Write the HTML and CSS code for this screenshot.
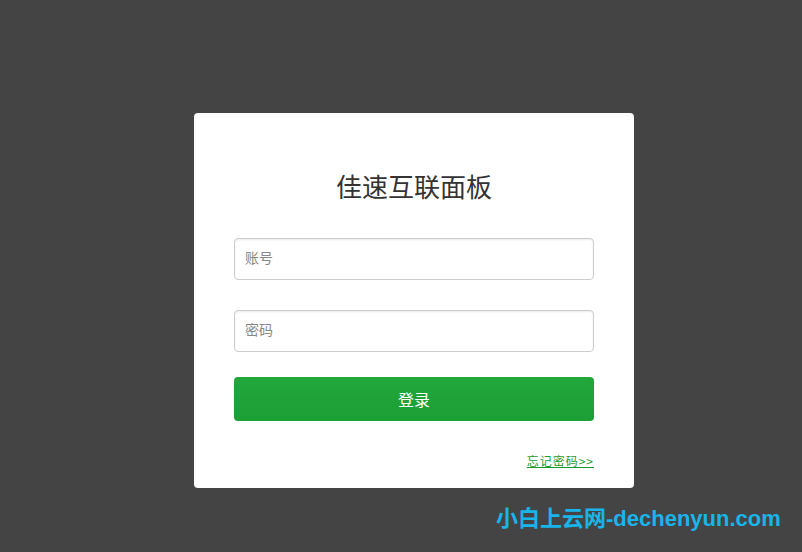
FILE: index.html
```html
<!DOCTYPE html>
<html lang="zh">
<head>
<meta charset="utf-8">
<title>佳速互联面板</title>
<link rel="stylesheet" href="styles.css">
</head>
<body>
<div class="page">
  <form class="card">
    <h1 class="title">佳速互联面板</h1>
    <input class="field" type="text" placeholder="账号">
    <input class="field field-pass" type="password" placeholder="密码">
    <button class="btn" type="button">登录</button>
    <div class="links"><a class="forgot" href="#">忘记密码&gt;&gt;</a></div>
  </form>
</div>
<div class="watermark">小白上云网-dechenyun.com</div>
</body>
</html>
```

FILE: styles.css
```css
html, body {
  margin: 0;
  padding: 0;
  height: 100%;
  background: #444444;
  font-family: "Noto Sans CJK SC", "Liberation Sans", sans-serif;
}
.page {
  padding: 113px 0 0 194px;
}
.card {
  box-sizing: border-box;
  width: 440px;
  height: 375px;
  background: #fff;
  border-radius: 4px;
  padding: 55px 40px 0;
  display: flex;
  flex-direction: column;
}
.title {
  margin: 0 0 34px;
  font-size: 26px;
  line-height: 36px;
  font-weight: normal;
  text-align: center;
  color: #333;
}
.field {
  box-sizing: border-box;
  width: 360px;
  height: 42px;
  margin: 0;
  border: 1px solid #ccc;
  border-radius: 4px;
  padding: 0 10px 4px;
  font-size: 14px;
  font-family: inherit;
  color: #555;
  box-shadow: inset 0 1px 2px rgba(0,0,0,0.08);
  outline: none;
}
.field::placeholder {
  color: #888;
}
.field-pass {
  margin-top: 30px;
}
.btn {
  margin-top: 25px;
  width: 360px;
  height: 44px;
  border: none;
  border-radius: 4px;
  background: linear-gradient(#22a73c, #1c9f35);
  color: #fff;
  font-size: 16px;
  font-family: inherit;
  padding: 0;
}
.links {
  margin-top: 30px;
  text-align: right;
  line-height: 16px;
}
.forgot {
  font-size: 12px;
  color: #1a9b30;
  text-decoration: underline;
  letter-spacing: 1px;
}
.watermark {
  position: absolute;
  left: 496px;
  top: 505px;
  font-family: "Liberation Sans", "Noto Sans CJK SC", sans-serif;
  font-size: 22px;
  font-weight: bold;
  color: #19b4ea;
  line-height: 28px;
  white-space: nowrap;
}
```
